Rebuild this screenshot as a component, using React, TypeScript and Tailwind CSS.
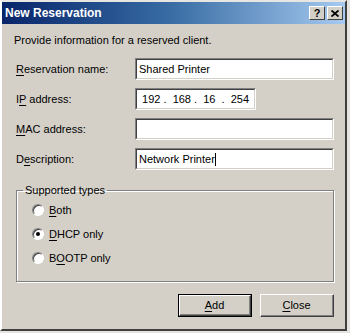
import React from "react";

const font = { fontFamily: '"Liberation Sans", Arial, sans-serif' };

const U: React.FC<{ children: React.ReactNode }> = ({ children }) => <span className="underline underline-offset-2">{children}</span>;

const Field: React.FC<{ label: React.ReactNode; value?: string; short?: boolean; caret?: boolean }> = ({ label, value, short, caret }) => (
  <div className="flex items-center h-[22px] pl-[2px]">
    <div className="w-[119px] text-[11px] text-black">{label}</div>
    <div className={`${short ? "w-[121px]" : "flex-1"} h-[22px] border-t border-l border-t-[#808080] border-l-[#808080] border-b border-r border-b-white border-r-white`}>
      <div className="h-full bg-white border-t border-l border-t-[#404040] border-l-[#404040] border-b border-r border-b-[#d4d0c8] border-r-[#d4d0c8] flex items-center px-[2px] text-[11px] text-black">
        {value}
        {caret && <span className="inline-block w-px h-[13px] bg-black" />}
      </div>
    </div>
  </div>
);

const Radio: React.FC<{ checked?: boolean; children: React.ReactNode }> = ({ checked, children }) => (
  <div className="flex items-center h-[24px] pl-[15px] gap-[5px] text-[11px]">
    <div className="w-[12px] h-[12px] rounded-full bg-white border border-t-[#808080] border-l-[#808080] border-b-white border-r-white shadow-[inset_1px_1px_0_#404040] flex items-center justify-center">
      {checked && <div className="w-[4px] h-[4px] rounded-full bg-black" />}
    </div>
    <span>{children}</span>
  </div>
);

const Button: React.FC<{ primary?: boolean; children: React.ReactNode }> = ({ primary, children }) => (
  <div className={`w-[74px] h-[23px] ${primary ? "border border-black" : ""}`}>
    <div className="h-full border border-t-white border-l-white border-b-[#404040] border-r-[#404040]">
      <div className="h-full flex items-center justify-center border-b border-r border-b-[#808080] border-r-[#808080] text-[11px]">{children}</div>
    </div>
  </div>
);

const TitleBtn: React.FC<{ children: React.ReactNode }> = ({ children }) => (
  <div className="w-[16px] h-[14px] bg-[#d4d0c8] border border-t-white border-l-white border-b-[#404040] border-r-[#404040] flex items-center justify-center text-[11px] font-bold leading-none text-black">
    {children}
  </div>
);

export default function App() {
  return (
    <div className="w-[350px] h-[333px] bg-[#e6e4e0]" style={font}>
      <div className="w-[347px] h-[331px] bg-[#d4d0c8] border-t-2 border-l-2 border-t-[#e8e6e2] border-l-white border-r-2 border-b-2 border-r-[#404040] border-b-[#404040] flex flex-col">
        <div className="h-[22px] bg-gradient-to-r from-[#0a246a] via-[#3a6ea5] to-[#a6caf0] flex items-center justify-between pl-[3px] pr-[2px]">
          <span className="text-white font-bold text-[12px]">New Reservation</span>
          <div className="flex gap-[2px]">
            <TitleBtn>?</TitleBtn>
            <TitleBtn>
              <svg width="8" height="7" viewBox="0 0 8 7">
                <path d="M0.5 0.5 L7.5 6.5 M7.5 0.5 L0.5 6.5" stroke="black" strokeWidth="1.8" />
              </svg>
            </TitleBtn>
          </div>
        </div>

        <div className="flex flex-col pl-[12px] pr-[11px]">
          <div className="mt-[10px] h-[13px] text-[11px] leading-[13px] text-black">Provide information for a reserved client.</div>

          <div className="mt-[11px] flex flex-col gap-[8px]">
            <Field label={<><U>R</U>eservation name:</>} value="Shared Printer" />
            <Field label={<>I<U>P</U> address:</>} value={"\u00a0192\u00a0.\u00a0\u00a0168\u00a0.\u00a0\u00a016\u00a0\u00a0.\u00a0\u00a0254"} short />
            <Field label={<><U>M</U>AC address:</>} />
            <Field label={<>D<U>e</U>scription:</>} value="Network Printer" caret />
          </div>

          <fieldset className="mt-[14px] ml-[2px] border border-[#808080] shadow-[inset_1px_1px_0_white,1px_1px_0_white] pb-[11px]">
            <legend className="ml-[6px] px-[2px] text-[11px] leading-[13px]">Supported types</legend>
            <div className="mt-[1px] flex flex-col">
              <Radio><U>B</U>oth</Radio>
              <Radio checked><U>D</U>HCP only</Radio>
              <Radio>B<U>O</U>OTP only</Radio>
            </div>
          </fieldset>

          <div className="mt-[12px] flex justify-end gap-[8px]">
            <Button primary><U>A</U>dd</Button>
            <Button><U>C</U>lose</Button>
          </div>
        </div>
      </div>
    </div>
  );
}
